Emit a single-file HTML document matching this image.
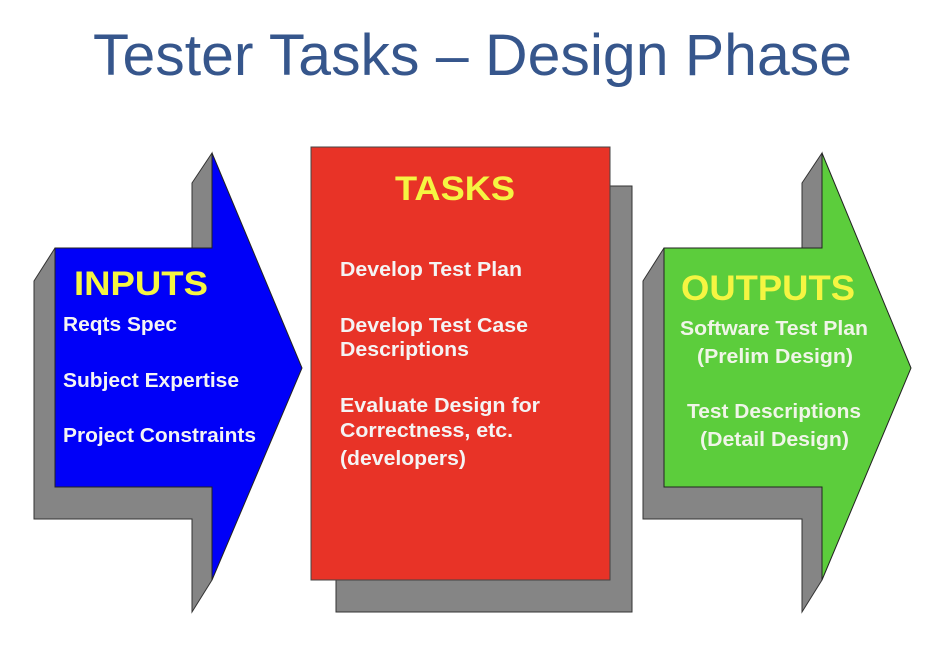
<!DOCTYPE html>
<html><head><meta charset="utf-8"><style>
html,body{margin:0;padding:0;background:#fff;}
svg{display:block;}
text{font-family:"Liberation Sans",Arial,sans-serif;}
</style></head><body>
<svg width="940" height="654" viewBox="0 0 940 654">
<text x="93" y="75" font-size="58" fill="#36568c" textLength="759" lengthAdjust="spacingAndGlyphs">Tester Tasks – Design Phase</text>

<polygon points="34,281 55,248 192,248 192,183 212,153 212,580 192,612 192,519 34,519" fill="#858585" stroke="#333" stroke-width="1"/>
<polygon points="55,248 212,248 212,153 302,368 212,580 212,487 55,487" fill="#0000f8" stroke="#222" stroke-width="1"/>
<text x="74" y="295" font-size="34" font-weight="bold" fill="#f5f542" textLength="134" lengthAdjust="spacingAndGlyphs">INPUTS</text>
<g font-size="20" font-weight="bold" fill="#f4f4f4">
<text x="63" y="331" textLength="114" lengthAdjust="spacingAndGlyphs">Reqts Spec</text>
<text x="63" y="387" textLength="176" lengthAdjust="spacingAndGlyphs">Subject Expertise</text>
<text x="63" y="442" textLength="193" lengthAdjust="spacingAndGlyphs">Project Constraints</text>
</g>

<rect x="336" y="186" width="296" height="426" fill="#858585" stroke="#333" stroke-width="1"/>
<rect x="311" y="147" width="299" height="433" fill="#e83327" stroke="#444" stroke-width="1"/>
<text x="395" y="200" font-size="34" font-weight="bold" fill="#f5f542" textLength="120" lengthAdjust="spacingAndGlyphs">TASKS</text>
<g font-size="20" font-weight="bold" fill="#f4f4f4">
<text x="340" y="276" textLength="182" lengthAdjust="spacingAndGlyphs">Develop Test Plan</text>
<text x="340" y="332" textLength="188" lengthAdjust="spacingAndGlyphs">Develop Test Case</text>
<text x="340" y="356" textLength="129" lengthAdjust="spacingAndGlyphs">Descriptions</text>
<text x="340" y="412" textLength="200" lengthAdjust="spacingAndGlyphs">Evaluate Design for</text>
<text x="340" y="437" textLength="173" lengthAdjust="spacingAndGlyphs">Correctness, etc.</text>
<text x="340" y="465" textLength="126" lengthAdjust="spacingAndGlyphs">(developers)</text>
</g>

<polygon points="643,281 664,248 802,248 802,183 822,153 822,580 802,612 802,519 643,519" fill="#858585" stroke="#333" stroke-width="1"/>
<polygon points="664,248 822,248 822,153 911,368 822,580 822,487 664,487" fill="#5ccd3c" stroke="#222" stroke-width="1"/>
<text x="681" y="300" font-size="35" font-weight="bold" fill="#f5f542" textLength="174" lengthAdjust="spacingAndGlyphs">OUTPUTS</text>
<g font-size="20" font-weight="bold" fill="#f0f5e8">
<text x="680" y="335" textLength="188" lengthAdjust="spacingAndGlyphs">Software Test Plan</text>
<text x="697" y="363" textLength="156" lengthAdjust="spacingAndGlyphs">(Prelim Design)</text>
<text x="687" y="418" textLength="174" lengthAdjust="spacingAndGlyphs">Test Descriptions</text>
<text x="700" y="446" textLength="149" lengthAdjust="spacingAndGlyphs">(Detail Design)</text>
</g>
</svg>
</body></html>
